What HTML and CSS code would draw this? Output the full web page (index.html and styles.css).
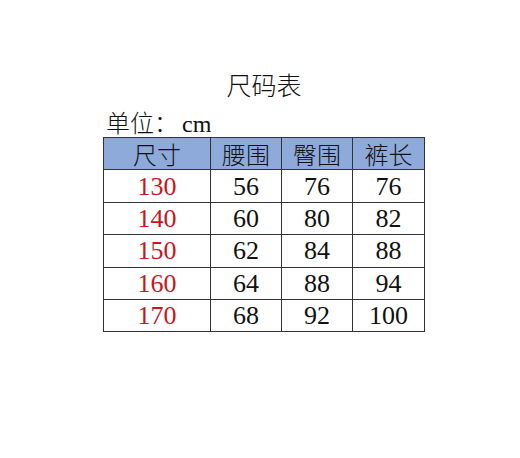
FILE: index.html
```html
<!DOCTYPE html>
<html lang="zh">
<head>
<meta charset="utf-8">
<link rel="stylesheet" href="styles.css">
</head>
<body>
<div class="sheet">
  <div class="title">尺码表</div>
  <div class="unit">单位：<span class="latin">cm</span></div>
  <table class="size-table">
    <thead>
      <tr><th>尺寸</th><th>腰围</th><th>臀围</th><th>裤长</th></tr>
    </thead>
    <tbody>
      <tr><td class="size">130</td><td>56</td><td>76</td><td>76</td></tr>
      <tr><td class="size">140</td><td>60</td><td>80</td><td>82</td></tr>
      <tr><td class="size">150</td><td>62</td><td>84</td><td>88</td></tr>
      <tr><td class="size">160</td><td>64</td><td>88</td><td>94</td></tr>
      <tr><td class="size">170</td><td>68</td><td>92</td><td>100</td></tr>
    </tbody>
  </table>
</div>
</body>
</html>
```
FILE: styles.css
```css
html, body {
  margin: 0;
  padding: 0;
  background: #ffffff;
}
.sheet {
  width: 322px;
  padding: 67px 0 0 103px;
  font-family: "Noto Sans CJK SC", sans-serif;
  color: #111;
}
.title {
  text-align: center;
  font-size: 25px;
  line-height: 34px;
  font-weight: 300;
  height: 40px;
}
.unit {
  font-size: 24px;
  line-height: 30px;
  font-weight: 300;
  padding-left: 3px;
  height: 30px;
}
.unit .latin {
  font-family: "Liberation Serif", serif;
  font-weight: 400;
  padding-left: 4px;
}
.size-table {
  border-collapse: collapse;
  width: 322px;
  table-layout: fixed;
}
.size-table th,
.size-table td {
  border: 1px solid #333;
  text-align: center;
  padding: 0;
  height: 31.4px;
}
.size-table th:nth-child(1) { width: 106px; }
.size-table th:nth-child(2) { width: 70px; }
.size-table th:nth-child(3) { width: 70px; }
.size-table th:nth-child(4) { width: 71px; }
.size-table th {
  background: #8eaadb;
  font-weight: 300;
  font-size: 24px;
  line-height: 31px;
  color: #111;
}
.size-table td {
  font-family: "Liberation Serif", serif;
  font-size: 26px;
  line-height: 31px;
  color: #111;
}
.size-table td.size {
  color: #c8161d;
}
```
